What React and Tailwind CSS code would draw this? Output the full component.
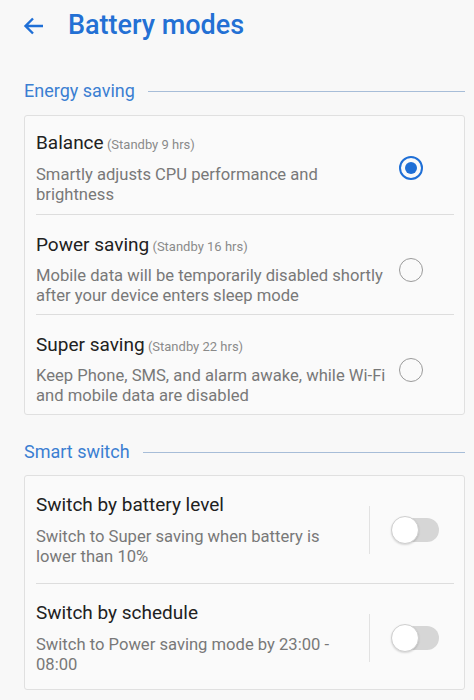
import React from "react";

function Radio({ checked }) {
  if (checked) {
    return (
      <div className="w-[24px] h-[24px] rounded-full border-[2.5px] border-[#1f6fd6] flex items-center justify-center shrink-0">
        <div className="w-[12px] h-[12px] rounded-full bg-[#1f6fd6]" />
      </div>
    );
  }
  return <div className="w-[24px] h-[24px] rounded-full border-[1.5px] border-[#9a9a9a] shrink-0" />;
}

function Toggle() {
  return (
    <div className="relative w-[48px] h-[30px] shrink-0">
      <div className="absolute left-[4px] right-0 top-[3px] h-[24px] rounded-full bg-[#d6d6d6]" />
      <div className="absolute left-0 top-[1px] w-[28px] h-[28px] rounded-full bg-white border border-[#cfcfcf] shadow-[0_1px_2px_rgba(0,0,0,0.15)]" />
    </div>
  );
}

function SectionHeader({ label }) {
  return (
    <div className="flex items-center h-[24px] pl-[24px] pr-[9px]">
      <span className="text-[18px] leading-[24px] text-[#3b7fd2] whitespace-nowrap">{label}</span>
      <div className="flex-1 h-px bg-[#a7bdd8] ml-[13px]" />
    </div>
  );
}

function ModeItem({ title, standby, lines, checked, first, last }) {
  return (
    <div>
      <div className={"flex items-center pl-[11px] " + (first ? "pt-[15px] pb-[9px]" : "pt-[18px] pb-[8px]")}>
        <div className="w-[358px] shrink-0">
          <div className="h-[24px] leading-[24px] whitespace-nowrap">
            <span className="text-[19px] text-[#212121]">{title}</span>
            <span className="text-[13px] text-[#8a8a8a]"> {standby}</span>
          </div>
          <div className={"text-[16.6px] leading-[20px] text-[#787878] whitespace-nowrap " + (first ? "mt-[10px]" : "mt-[9px]")}>
            {lines[0]}
            <br />
            {lines[1]}
          </div>
        </div>
        <div className="ml-[5px]">
          <Radio checked={checked} />
        </div>
      </div>
      {!last && <div className="h-px bg-[#dddddd] ml-[11px] mr-[10px]" />}
    </div>
  );
}

function SwitchItem({ title, lines, last }) {
  return (
    <div>
      <div className={"flex items-center pl-[11px] pr-[25px] pt-[17px] " + (last ? "pb-[14px]" : "pb-[16px]")}>
        <div className="flex-1 min-w-0">
          <div className="h-[24px] leading-[24px] text-[19px] text-[#212121] whitespace-nowrap">{title}</div>
          <div className="mt-[10px] text-[16.6px] leading-[20px] text-[#787878] whitespace-nowrap">
            {lines[0]}
            <br />
            {lines[1]}
          </div>
        </div>
        <div className="w-px h-[48px] bg-[#e2e2e2] mr-[21px]" />
        <Toggle />
      </div>
      {!last && <div className="h-px bg-[#dddddd] ml-[11px] mr-[10px]" />}
    </div>
  );
}

export default function App() {
  return (
    <div
      className="w-[474px] h-[700px] bg-[#f8f8f8] overflow-hidden"
      style={{ fontFamily: "Roboto, 'Liberation Sans', sans-serif" }}
    >
      <div className="h-[50px] flex items-center pl-[23px]">
        <svg width="21" height="18" viewBox="0 0 21 18" className="mt-[2px]">
          <path d="M20 9 H3 M10 1.5 L2.5 9 L10 16.5" fill="none" stroke="#1f6fd6" strokeWidth="2.4" strokeLinejoin="miter" />
        </svg>
        <span className="ml-[24px] text-[27px] font-medium text-[#2370d4] leading-[32px]">Battery modes</span>
      </div>

      <div className="mt-[29px]">
        <SectionHeader label="Energy saving" />
      </div>

      <div className="mt-[12px] ml-[24px] mr-[9px] border border-[#e0e0e0] rounded-[3px] bg-[#fafafa]">
        <ModeItem
          title="Balance"
          standby="(Standby 9 hrs)"
          lines={["Smartly adjusts CPU performance and", "brightness"]}
          checked
          first
        />
        <ModeItem
          title="Power saving"
          standby="(Standby 16 hrs)"
          lines={["Mobile data will be temporarily disabled shortly", "after your device enters sleep mode"]}
        />
        <ModeItem
          title="Super saving"
          standby="(Standby 22 hrs)"
          lines={["Keep Phone, SMS, and alarm awake, while Wi-Fi", "and mobile data are disabled"]}
          last
        />
      </div>

      <div className="mt-[25px]">
        <SectionHeader label="Smart switch" />
      </div>

      <div className="mt-[11px] ml-[24px] mr-[9px] border border-[#e0e0e0] rounded-[3px] bg-[#fafafa]">
        <SwitchItem
          title="Switch by battery level"
          lines={["Switch to Super saving when battery is", "lower than 10%"]}
        />
        <SwitchItem
          title="Switch by schedule"
          lines={["Switch to Power saving mode by 23:00 -", "08:00"]}
          last
        />
      </div>
    </div>
  );
}
